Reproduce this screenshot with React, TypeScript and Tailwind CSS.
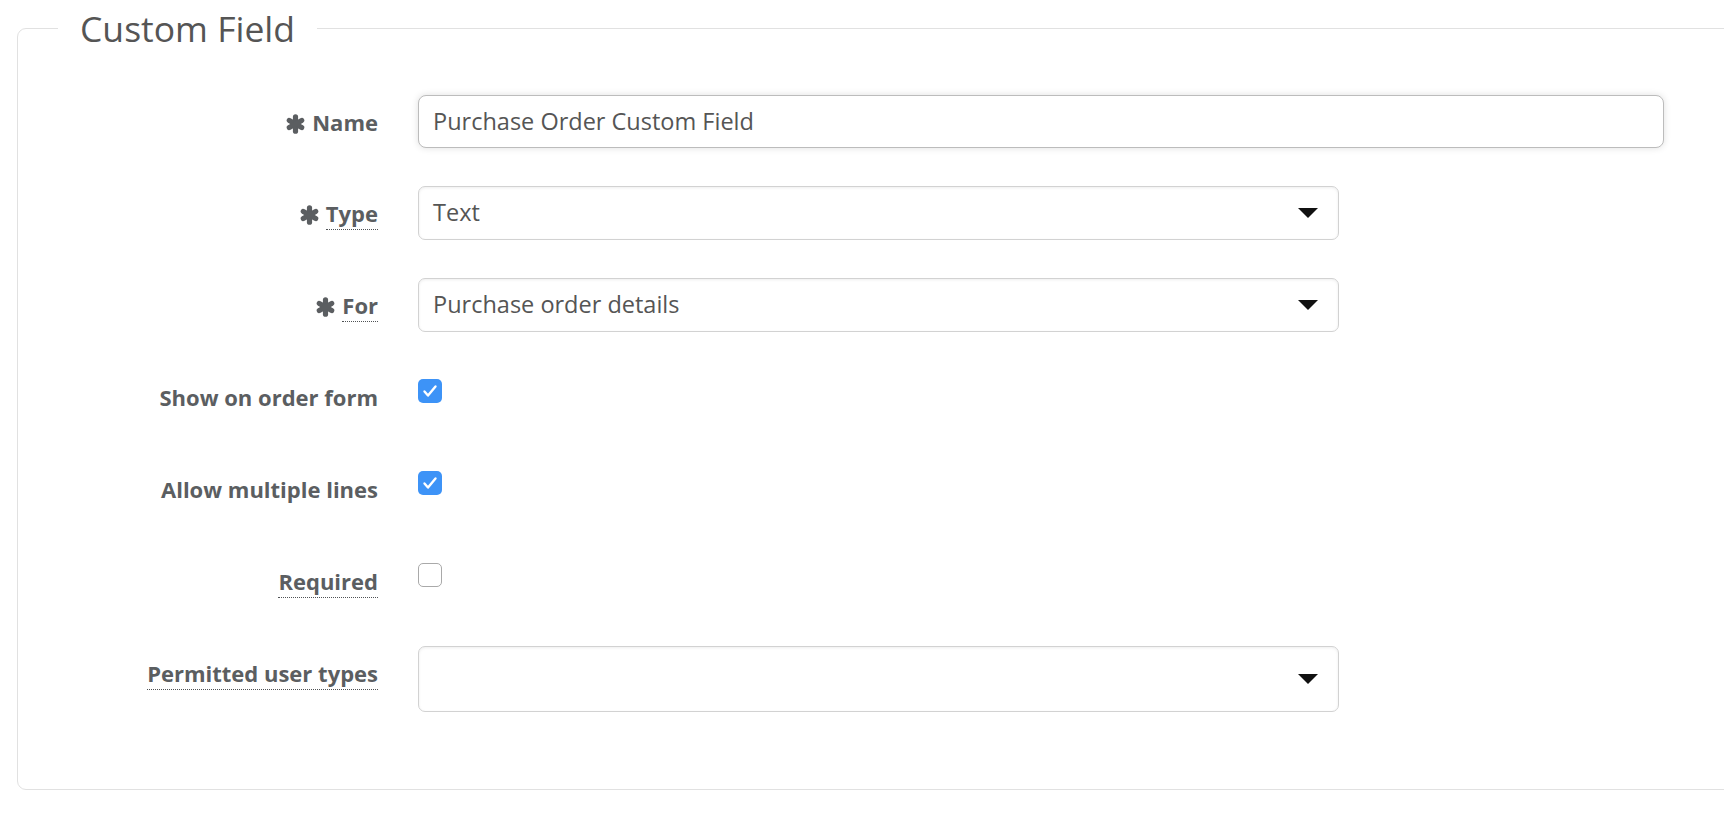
import React from "react";

const FONT = { fontFamily: '"Open Sans", "Noto Sans", sans-serif' };

function Asterisk() {
  return (
    <svg width="21" height="20" viewBox="0 0 21 20" className="inline-block mr-[6px] align-[-3px]">
      <g stroke="#5b5e61" strokeWidth="5.2" strokeLinecap="round">
        <line x1="10.5" y1="2.8" x2="10.5" y2="17.2" />
        <line x1="4.3" y1="6.4" x2="16.7" y2="13.6" />
        <line x1="4.3" y1="13.6" x2="16.7" y2="6.4" />
      </g>
    </svg>
  );
}

function Label({ text, required, dotted }: { text: string; required?: boolean; dotted?: boolean }) {
  return (
    <div className="w-[360px] shrink-0 text-right pt-[14px] leading-[26px] text-[22px] font-bold text-[#5b5e61]">
      {required && <Asterisk />}
      <span
        className={
          "inline-block leading-[26px] pb-[3px] " +
          (dotted ? "border-b border-dotted border-[#4f5255]" : "border-b border-transparent")
        }
      >
        {text}
      </span>
    </div>
  );
}

function Arrow() {
  return (
    <svg width="20" height="10" viewBox="0 0 20 10">
      <polygon points="0,0 20,0 10,10" fill="#111" />
    </svg>
  );
}

function Select({ value, tall }: { value: string; tall?: boolean }) {
  return (
    <div
      className={
        "w-[921px] " +
        (tall ? "h-[66px]" : "h-[54px]") +
        " flex items-center justify-between pl-[14px] pr-[20px] bg-white border border-[#d2d2d2] rounded-[7px] shadow-[inset_0_1px_3px_rgba(0,0,0,0.07)] text-[23.5px] text-[#555]"
      }
    >
      <span>{value}</span>
      <Arrow />
    </div>
  );
}

function Checkbox({ checked }: { checked?: boolean }) {
  return checked ? (
    <div className="mt-[9px] w-[24px] h-[24px] rounded-[5px] bg-[#3d93f7] flex items-center justify-center">
      <svg width="16" height="14" viewBox="0 0 16 14">
        <polyline points="2.5,7.5 6,11.5 13.5,2.5" fill="none" stroke="white" strokeWidth="2.4" strokeLinecap="round" strokeLinejoin="round" />
      </svg>
    </div>
  ) : (
    <div className="mt-[9px] w-[24px] h-[24px] rounded-[5px] bg-white border border-[#a9a9a9]" />
  );
}

export default function App() {
  return (
    <div className="w-full h-[830px] overflow-hidden bg-white" style={FONT}>
      <fieldset className="ml-[17px] mt-[7px] w-[1760px] border border-[#e1e1e1] rounded-[9px] p-0 pb-[77px]">
        <legend className="ml-[40px] px-[22px] text-[35.5px] leading-[42px] text-[#555]">Custom Field</legend>
        <div className="pt-[46px] flex flex-col gap-[38px]">
          <div className="flex h-[53px] gap-[40px]">
            <Label text="Name" required />
            <div className="w-[1246px] h-[53px] flex items-center px-[14px] bg-white border border-[#bcbcbc] rounded-[8px] shadow-[0_0_7px_rgba(0,0,0,0.13)] text-[23.5px] text-[#555]">
              Purchase Order Custom Field
            </div>
          </div>
          <div className="flex h-[54px] gap-[40px]">
            <Label text="Type" required dotted />
            <Select value="Text" />
          </div>
          <div className="flex h-[54px] gap-[40px]">
            <Label text="For" required dotted />
            <Select value="Purchase order details" />
          </div>
          <div className="flex h-[54px] gap-[40px]">
            <Label text="Show on order form" />
            <Checkbox checked />
          </div>
          <div className="flex h-[54px] gap-[40px]">
            <Label text="Allow multiple lines" />
            <Checkbox checked />
          </div>
          <div className="flex h-[54px] gap-[40px]">
            <Label text="Required" dotted />
            <Checkbox />
          </div>
          <div className="flex h-[66px] gap-[40px]">
            <Label text="Permitted user types" dotted />
            <Select value="" tall />
          </div>
        </div>
      </fieldset>
    </div>
  );
}
